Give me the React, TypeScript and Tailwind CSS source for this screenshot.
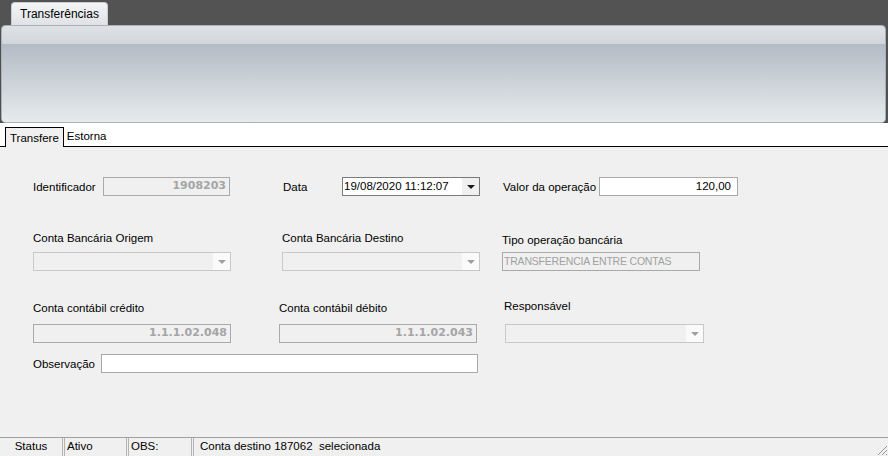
import { ReactNode } from "react";

const font = { fontFamily: '"Liberation Sans", Arial, sans-serif' };

const Arrow = ({ color = "#1a1a1a" }: { color?: string }) => (
  <svg width="8" height="4" viewBox="0 0 8 4">
    <path d="M0 0h8L4 4z" fill={color} />
  </svg>
);

const ReadOnly = ({ w, value, bold }: { w: string; value: string; bold?: boolean }) => (
  <div
    className={`${w} h-[19px] border border-[#a9a9a9] bg-[#f0f0f0] flex items-center justify-end pr-[3px] text-[#a5a5a5] text-[11px] ${bold ? "font-bold" : ""}`}
    style={bold ? { fontFamily: '"DejaVu Sans", Verdana, sans-serif' } : undefined}
  >
    {value}
  </div>
);

const Combo = ({ w }: { w: string }) => (
  <div className={`${w} h-[19px] border border-[#c8c8c8] bg-[#f0f0f0] flex`}>
    <div className="flex-1" />
    <div className="w-[17px] bg-[#fafafa] flex items-center justify-center">
      <Arrow color="#a0a0a0" />
    </div>
  </div>
);

const Label = ({ children, className = "" }: { children: ReactNode; className?: string }) => (
  <span className={`text-[11.5px] leading-[14px] text-black whitespace-nowrap ${className}`}>{children}</span>
);

export default function App() {
  return (
    <div className="w-[888px] h-[456px] bg-[#f0f0f0] flex flex-col overflow-hidden" style={font}>
      {/* header */}
      <div className="h-[123px] bg-[#535353] flex flex-col shrink-0">
        <div className="h-[25px] pt-[2px] pl-[11px] flex">
          <div className="w-[97px] h-[23px] rounded-t-[4px] bg-gradient-to-b from-[#f4f5f6] to-[#dfe2e6] border border-b-0 border-[#c9ccd1] flex items-center justify-center text-[12px] text-black">
            Transferências
          </div>
        </div>
        <div className="flex-1 ml-[1px] mr-[2px] rounded-[4px] border border-[#aab0b8] overflow-hidden flex flex-col shadow-[0_1px_1px_rgba(0,0,0,0.4)]">
          <div className="h-[18px] bg-gradient-to-b from-[#dfe1e5] to-[#d2d6dc]" />
          <div className="flex-1 bg-gradient-to-b from-[#b3bbc5] to-[#e6ebec]" />
        </div>
      </div>

      {/* page tabs */}
      <div className="h-[24px] bg-white flex items-end pl-[5px] border-b border-black shrink-0">
        <div className="h-[20px] px-[4px] pt-[2px] border border-b-0 border-black bg-[#f0f0f0] flex items-center text-[11.5px] text-black -mb-[1px]">
          Transfere
        </div>
        <div className="h-[20px] px-[3px] pt-[2px] flex items-center text-[11.5px] text-black">Estorna</div>
      </div>

      {/* form */}
      <div className="flex-1 flex flex-col">
        <div className="mt-[30px] flex items-center h-[19px]">
          <Label className="ml-[33px] w-[70px]">Identificador</Label>
          <ReadOnly w="w-[127px]" value="1908203" bold />
          <Label className="ml-[53px] w-[59px]">Data</Label>
          <div className="w-[138px] h-[19px] border border-[#7a7a7a] bg-white flex items-center">
            <span className="flex-1 pl-[1px] text-[11.5px] text-black">19/08/2020 11:12:07</span>
            <div className="w-[17px] h-full bg-[#f0f0f0] flex items-center justify-center">
              <Arrow />
            </div>
          </div>
          <Label className="ml-[23px] w-[96px]">Valor da operação</Label>
          <div className="w-[139px] h-[19px] border border-[#a9a9a9] bg-white flex items-center justify-end pr-[6px] text-[11.5px] text-black">
            120,00
          </div>
        </div>

        <div className="mt-[35px] flex">
          <div className="ml-[33px] w-[198px] flex flex-col">
            <Label>Conta Bancária Origem</Label>
            <div className="mt-[7px]">
              <Combo w="w-[198px]" />
            </div>
          </div>
          <div className="ml-[51px] w-[198px] flex flex-col">
            <Label>Conta Bancária Destino</Label>
            <div className="mt-[7px]">
              <Combo w="w-[198px]" />
            </div>
          </div>
          <div className="ml-[22px] w-[198px] flex flex-col">
            <Label className="mt-[2px]">Tipo operação bancária</Label>
            <div className="mt-[5px] w-[198px] h-[19px] border border-[#a9a9a9] bg-[#f0f0f0] flex items-center pl-[1px] text-[10.5px] text-[#a0a0a0] whitespace-nowrap tracking-[-0.2px]">
              TRANSFERENCIA ENTRE CONTAS
            </div>
          </div>
        </div>

        <div className="mt-[30px] flex">
          <div className="ml-[33px] w-[198px] flex flex-col">
            <Label>Conta contábil crédito</Label>
            <div className="mt-[9px]">
              <ReadOnly w="w-[198px]" value="1.1.1.02.048" bold />
            </div>
          </div>
          <div className="ml-[48px] w-[198px] flex flex-col">
            <Label>Conta contábil débito</Label>
            <div className="mt-[9px]">
              <ReadOnly w="w-[198px]" value="1.1.1.02.043" bold />
            </div>
          </div>
          <div className="ml-[28px] w-[199px] flex flex-col">
            <Label className="-mt-[2px] ml-[-1px]">Responsável</Label>
            <div className="mt-[11px]">
              <Combo w="w-[199px]" />
            </div>
          </div>
        </div>

        <div className="mt-[11px] flex items-center h-[19px]">
          <Label className="ml-[33px] w-[68px]">Observação</Label>
          <div className="w-[377px] h-[19px] border border-[#a9a9a9] bg-white" />
        </div>
      </div>

      {/* status bar */}
      <div className="h-[19px] border-t border-[#a0a0a0] flex text-[11.5px] text-black shrink-0">
        <div className="w-[63px] border-r border-[#b4b4b4] flex items-center justify-center">Status</div>
        <div className="w-[63px] ml-[1px] border-l border-r border-[#b4b4b4] flex items-center pl-[2px]">Ativo</div>
        <div className="w-[64px] ml-[1px] border-l border-r border-[#b4b4b4] flex items-center pl-[2px]">OBS:</div>
        <div className="flex-1 ml-[1px] border-l border-[#b4b4b4] flex items-center pl-[6px] whitespace-pre">
          Conta destino 187062  selecionada
        </div>
        <div className="w-[18px] relative">
          <svg className="absolute right-0 bottom-0" width="12" height="12" viewBox="0 0 12 12">
            <path d="M11 2L2 11M11 6L6 11M11 10L10 11" stroke="#999" strokeWidth="1" />
          </svg>
        </div>
      </div>
    </div>
  );
}
